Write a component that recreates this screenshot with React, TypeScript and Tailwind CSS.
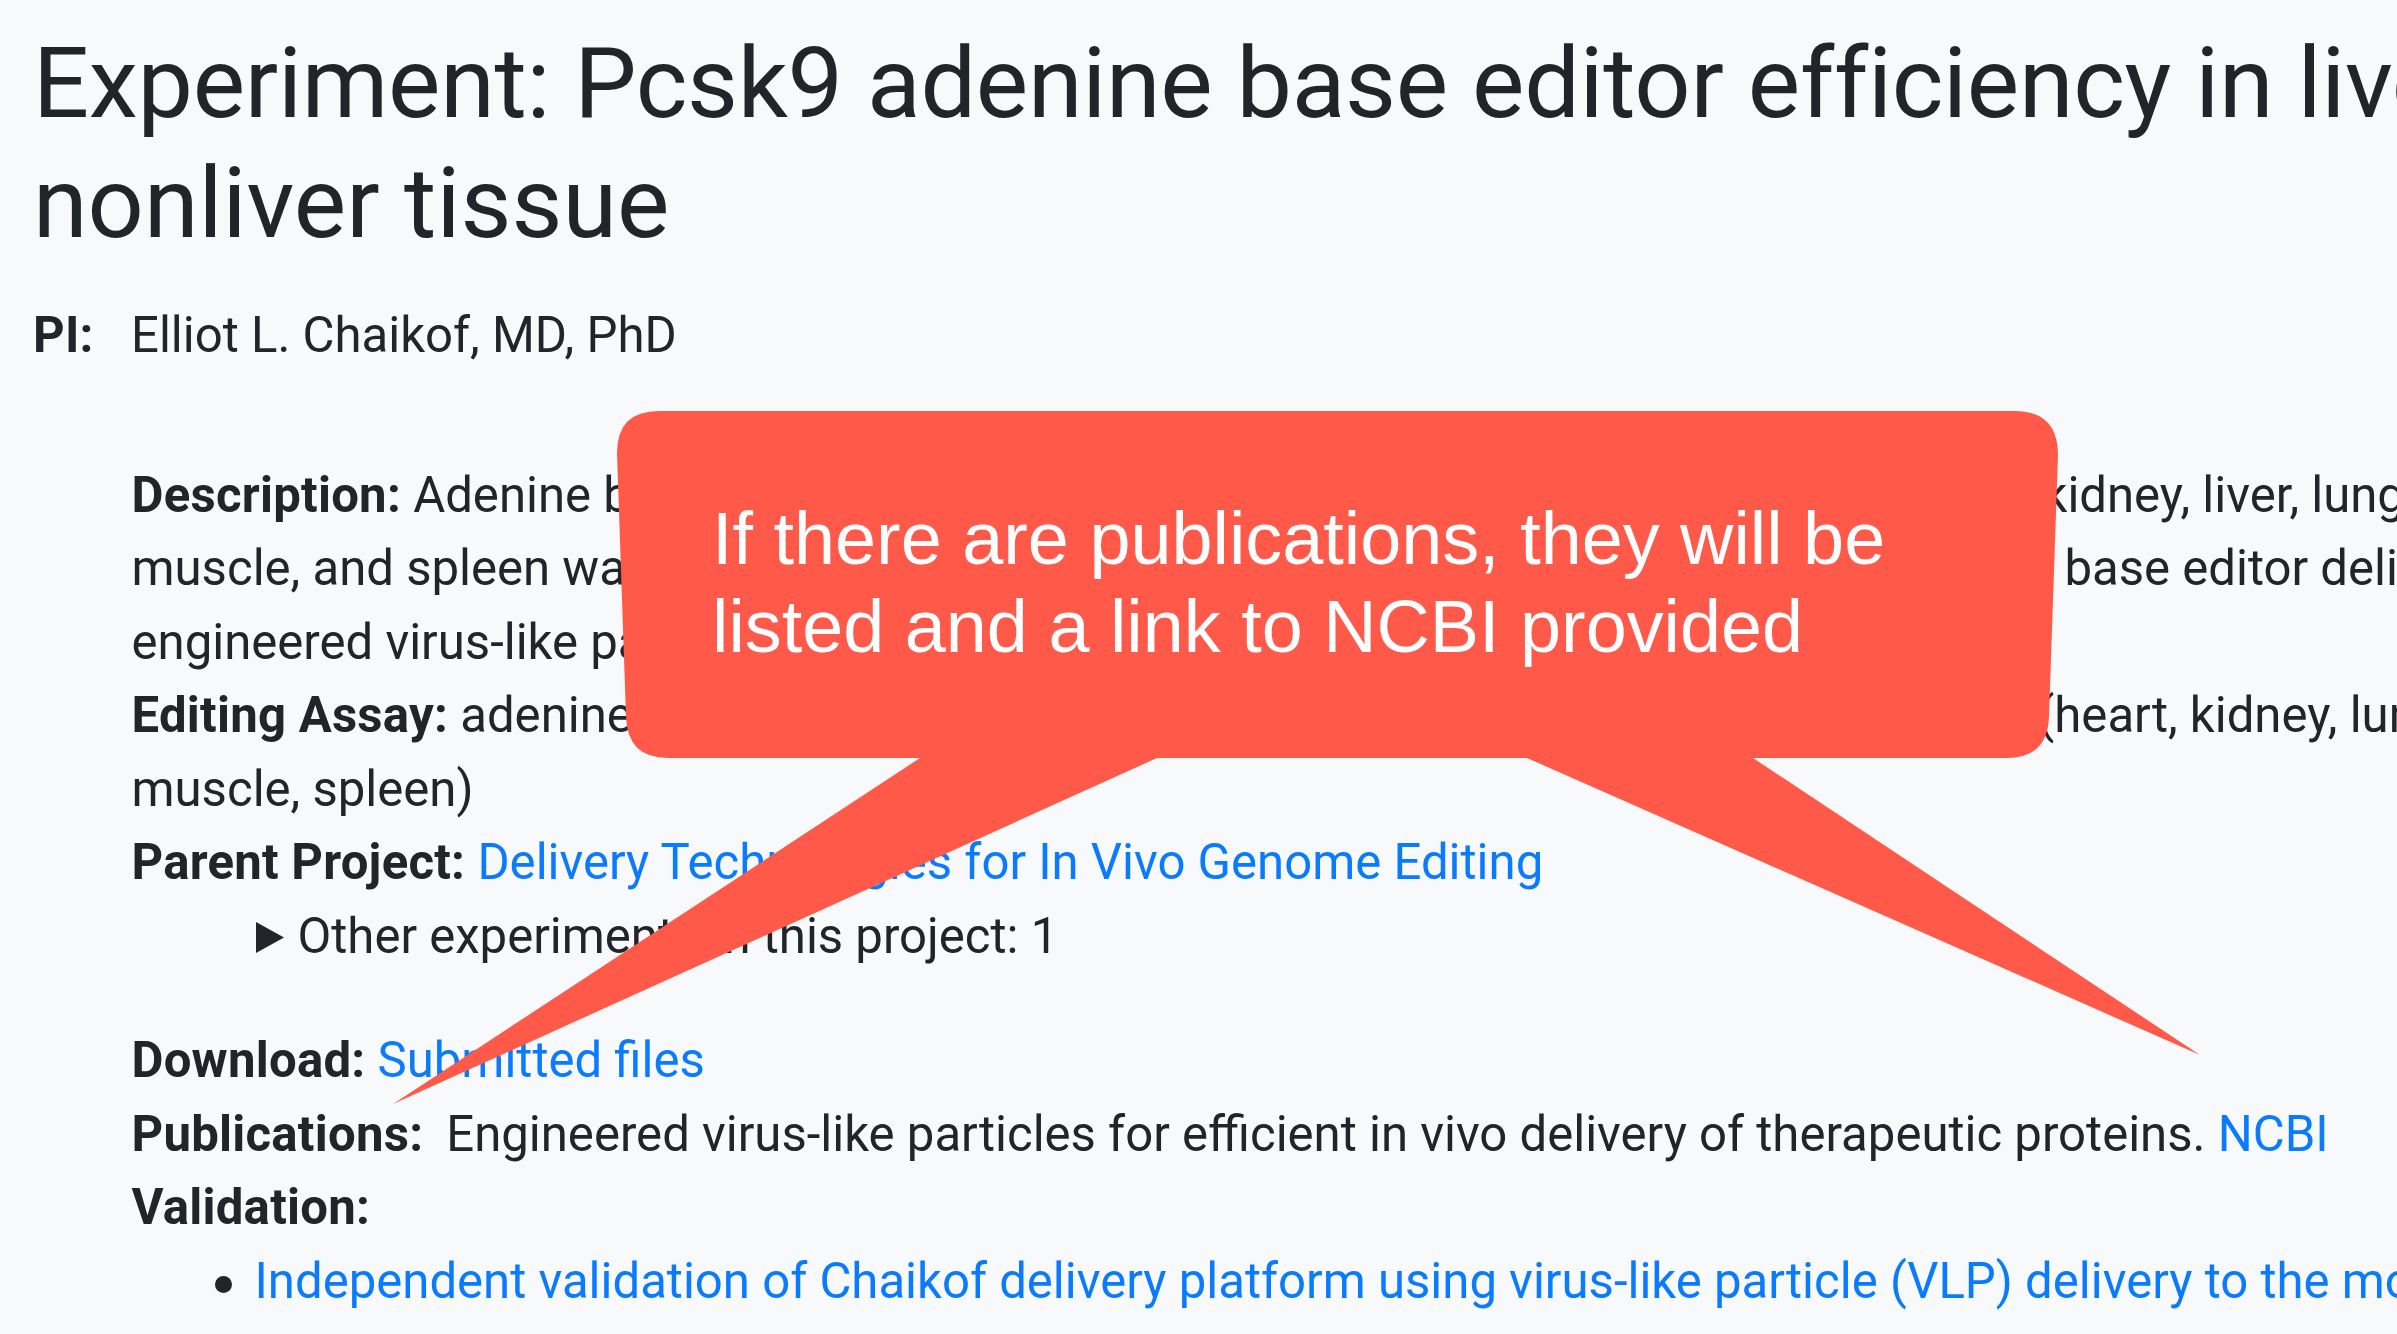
import React from "react";

function Callout() {
  const d =
    "M 659 411 L 2014 411 Q 2058 411 2058 455 L 2049 716 Q 2048 758 2007 758 L 1753 758 L 2200 1055 L 1527 758 L 1157 758 L 393 1104 L 920 758 L 668 758 Q 627 758 626 716 L 617 453 Q 617 411 659 411 Z";
  return (
    <>
      <svg
        className="absolute left-0 top-0 pointer-events-none"
        width="2397"
        height="1334"
        viewBox="0 0 2397 1334"
      >
        <path d={d} fill="#ff594a" />
      </svg>
      <div className="absolute left-[712px] top-[495px] text-white text-[73.8px] leading-[88px] font-['Liberation_Sans',Arial,sans-serif] whitespace-nowrap">
        If there are publications, they will be
        <br />
        listed and a link to NCBI provided
      </div>
    </>
  );
}

export default function App() {
  const b = "font-bold tracking-[0.25px]";
  return (
    <div className="relative w-[2397px] h-[1334px] overflow-hidden bg-[#f8f9fa] text-[#212529] font-['Roboto',sans-serif]">
      <div className="pl-[33px] pt-[23px]">
        <h1 className="text-[98.8px] leading-[120px] font-normal whitespace-nowrap">
          <span className="tracking-[-0.3px]">Experiment: Pcsk9 adenine base editor efficiency in liver and</span>
          <br />
          nonliver tissue
        </h1>

        <div className="mt-[36px] flex text-[49.1px] leading-[73.5px] whitespace-nowrap">
          <span className={"w-[98px] shrink-0 " + b}>PI:</span>
          <span>Elliot L. Chaikof, MD, PhD</span>
        </div>

        <div className="ml-[98.5px] mt-[86px] text-[49.1px] leading-[73.5px] whitespace-nowrap">
          <div className="flex">
            <div className="w-[1911px] shrink-0 overflow-hidden">
              <span className={b}>Description:</span> Adenine base editing efficiency was assessed in the heart,
            </div>
            <div>kidney, liver, lung,</div>
          </div>
          <div className="flex">
            <div className="w-[1933px] shrink-0 overflow-hidden">
              muscle, and spleen was measured following systemic delivery of Pcsk9 adenine
            </div>
            <div>base editor delivered by</div>
          </div>
          <div>engineered virus-like particles (eVLPs).</div>
          <div className="flex">
            <div className="w-[1906px] shrink-0 overflow-hidden">
              <span className={b}>Editing Assay:</span> adenine base editing by targeted amplicon sequencing in nonliver tissues
            </div>
            <div>(heart, kidney, lung,</div>
          </div>
          <div>muscle, spleen)</div>
          <div>
            <span className={b}>Parent Project:</span>{" "}
            <a className="text-[#0a7bff]" href="#">
              Delivery Technologies for In Vivo Genome Editing
            </a>
          </div>
          <div className="ml-[124px] flex items-baseline">
            <svg width="28" height="31" viewBox="0 0 28 31" className="shrink-0">
              <path d="M 0 0 L 28 15.5 L 0 31 Z" fill="#212529" />
            </svg>
            <span className="ml-[14px]">Other experiments in this project: 1</span>
          </div>

          <div className="mt-[51px]">
            <span className={b}>Download:</span>{" "}
            <a className="text-[#0a7bff]" href="#">
              Submitted files
            </a>
          </div>
          <div>
            <span className={b}>Publications:</span>
            <span className="ml-[23px]">
              Engineered virus-like particles for efficient in vivo delivery of therapeutic proteins.
            </span>{" "}
            <a className="text-[#0a7bff]" href="#">
              NCBI
            </a>
          </div>
          <div className={b}>Validation:</div>
          <ul className="list-none">
            <li className="flex items-start">
              <span className="ml-[83px] mt-[31px] w-[17px] h-[17px] shrink-0 rounded-full bg-[#212529]" />
              <a className="ml-[23px] text-[#0a7bff]" href="#">
                Independent validation of Chaikof delivery platform using virus-like particle (VLP) delivery to the mouse liver
              </a>
            </li>
          </ul>
        </div>
      </div>
      <Callout />
    </div>
  );
}
